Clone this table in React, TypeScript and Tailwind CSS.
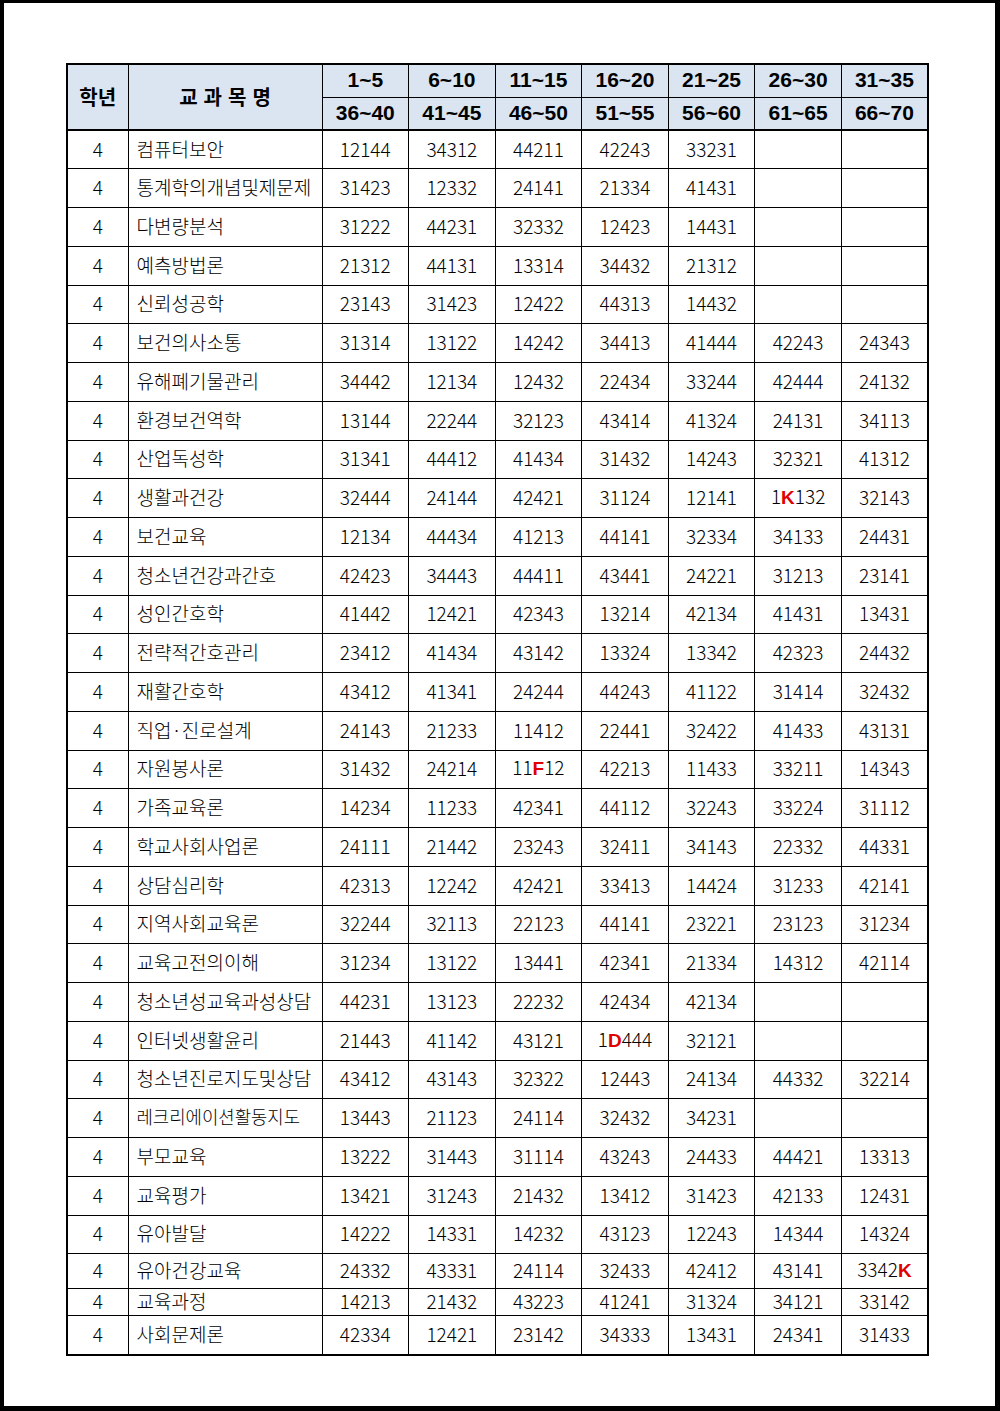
import React from 'react';

// subject name, then 7 answer groups; {X} marks a red letter
const rows: [string, string[]][] = [
  ["컴퓨터보안", ["12144", "34312", "44211", "42243", "33231", "", ""]],
  ["통계학의개념및제문제", ["31423", "12332", "24141", "21334", "41431", "", ""]],
  ["다변량분석", ["31222", "44231", "32332", "12423", "14431", "", ""]],
  ["예측방법론", ["21312", "44131", "13314", "34432", "21312", "", ""]],
  ["신뢰성공학", ["23143", "31423", "12422", "44313", "14432", "", ""]],
  ["보건의사소통", ["31314", "13122", "14242", "34413", "41444", "42243", "24343"]],
  ["유해폐기물관리", ["34442", "12134", "12432", "22434", "33244", "42444", "24132"]],
  ["환경보건역학", ["13144", "22244", "32123", "43414", "41324", "24131", "34113"]],
  ["산업독성학", ["31341", "44412", "41434", "31432", "14243", "32321", "41312"]],
  ["생활과건강", ["32444", "24144", "42421", "31124", "12141", "1{K}132", "32143"]],
  ["보건교육", ["12134", "44434", "41213", "44141", "32334", "34133", "24431"]],
  ["청소년건강과간호", ["42423", "34443", "44411", "43441", "24221", "31213", "23141"]],
  ["성인간호학", ["41442", "12421", "42343", "13214", "42134", "41431", "13431"]],
  ["전략적간호관리", ["23412", "41434", "43142", "13324", "13342", "42323", "24432"]],
  ["재활간호학", ["43412", "41341", "24244", "44243", "41122", "31414", "32432"]],
  ["직업·진로설계", ["24143", "21233", "11412", "22441", "32422", "41433", "43131"]],
  ["자원봉사론", ["31432", "24214", "11{F}12", "42213", "11433", "33211", "14343"]],
  ["가족교육론", ["14234", "11233", "42341", "44112", "32243", "33224", "31112"]],
  ["학교사회사업론", ["24111", "21442", "23243", "32411", "34143", "22332", "44331"]],
  ["상담심리학", ["42313", "12242", "42421", "33413", "14424", "31233", "42141"]],
  ["지역사회교육론", ["32244", "32113", "22123", "44141", "23221", "23123", "31234"]],
  ["교육고전의이해", ["31234", "13122", "13441", "42341", "21334", "14312", "42114"]],
  ["청소년성교육과성상담", ["44231", "13123", "22232", "42434", "42134", "", ""]],
  ["인터넷생활윤리", ["21443", "41142", "43121", "1{D}444", "32121", "", ""]],
  ["청소년진로지도및상담", ["43412", "43143", "32322", "12443", "24134", "44332", "32214"]],
  ["레크리에이션활동지도", ["13443", "21123", "24114", "32432", "34231", "", ""]],
  ["부모교육", ["13222", "31443", "31114", "43243", "24433", "44421", "13313"]],
  ["교육평가", ["13421", "31243", "21432", "13412", "31423", "42133", "12431"]],
  ["유아발달", ["14222", "14331", "14232", "43123", "12243", "14344", "14324"]],
  ["유아건강교육", ["24332", "43331", "24114", "32433", "42412", "43141", "3342{K}"]],
  ["교육과정", ["14213", "21432", "43223", "41241", "31324", "34121", "33142"]],
  ["사회문제론", ["42334", "12421", "23142", "34333", "13431", "24341", "31433"]],
];

const top = ["1~5", "6~10", "11~15", "16~20", "21~25", "26~30", "31~35"];
const bottom = ["36~40", "41~45", "46~50", "51~55", "56~60", "61~65", "66~70"];

function Answer({ value }: { value: string }) {
  const parts = value.split(/(\{.\})/).filter(Boolean);
  return (
    <>
      {parts.map((p, i) =>
        p.startsWith("{") ? (
          <span key={i} className="font-bold text-[#e00000] font-[family-name:'Liberation_Sans',sans-serif]">{p[1]}</span>
        ) : (
          <span key={i}>{p}</span>
        )
      )}
    </>
  );
}

function rowHeight(i: number) {
  if (i === 29) return "h-[35px]";
  if (i === 30) return "h-[27px]";
  return "h-[38.76px]";
}

function Range({ text }: { text: string }) {
  return <span className="font-[family-name:'Liberation_Sans',sans-serif] font-bold text-[21px]">{text}</span>;
}

export default function App() {
  const hd = "bg-[#dbe5f1] border border-black text-black p-0 leading-none";
  const cell = "border border-black p-0 pb-[3px] leading-none font-light";
  return (
    <div className="w-[1000px] h-[1411px] box-border border-l-4 border-t-[3px] border-r-[5px] border-b-[5px] border-black bg-white pl-[62px] pt-[60px]">
      <table className="border-collapse table-fixed w-[861px] border-2 border-black font-[family-name:'Noto_Sans_CJK_KR',sans-serif] text-black">
        <colgroup>
          <col className="w-[61px]" />
          <col className="w-[194px]" />
          {top.map((t) => (
            <col key={t} className="w-[86.57px]" />
          ))}
        </colgroup>
        <thead>
          <tr className="h-[33px]">
            <th rowSpan={2} className={`${hd} border-b-2 text-[20px] font-bold`}>학년</th>
            <th rowSpan={2} className={`${hd} border-b-2 text-[20px] font-bold tracking-[6px] pl-[6px]`}>교과목명</th>
            {top.map((t) => (
              <th key={t} className={`${hd} pb-[2px]`}><Range text={t} /></th>
            ))}
          </tr>
          <tr className="h-[33px]">
            {bottom.map((t) => (
              <th key={t} className={`${hd} border-b-2 pb-[2px]`}><Range text={t} /></th>
            ))}
          </tr>
        </thead>
        <tbody>
          {rows.map(([name, vals], i) => (
            <tr key={name} className={rowHeight(i)}>
              <td className={`${cell} text-center text-[19px]`}>4</td>
              <td className={`${cell} text-left pl-2 whitespace-nowrap ${name === "레크리에이션활동지도" ? "text-[17.8px]" : "text-[19px]"}`}>{name}</td>
              {vals.map((v, j) => (
                <td key={j} className={`${cell} text-center text-[19px]`}>
                  <Answer value={v} />
                </td>
              ))}
            </tr>
          ))}
        </tbody>
      </table>
    </div>
  );
}
